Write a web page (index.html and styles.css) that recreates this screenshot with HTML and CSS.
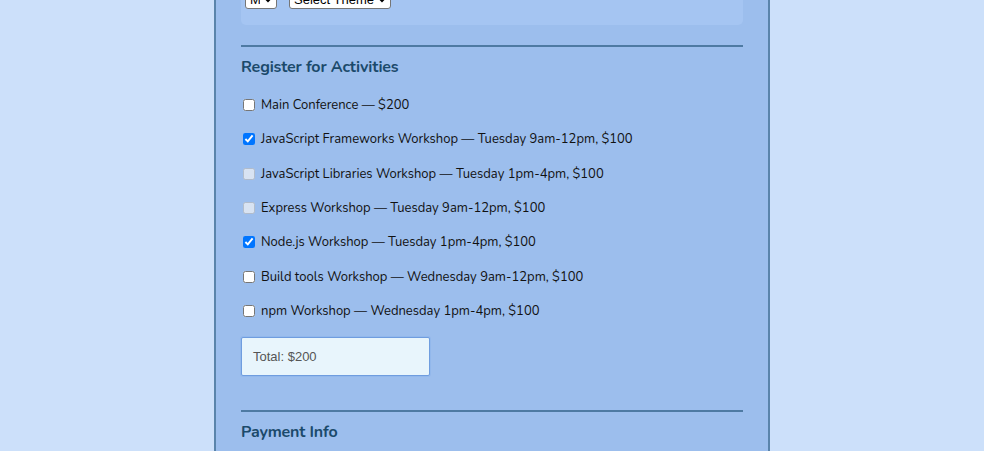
FILE: index.html
```html
<!DOCTYPE html>
<html lang="en">
<head>
<meta charset="utf-8">
<title>Register</title>
<link rel="stylesheet" href="styles.css">
</head>
<body>
<div class="page">
  <form class="form">
    <div class="shirt-box">
      <select class="sel-size"><option>M</option></select>
      <select class="sel-theme"><option>Select Theme</option></select>
    </div>

    <fieldset class="activities">
      <legend class="section-title">Register for Activities</legend>
      <label class="act"><input type="checkbox">Main Conference — $200</label>
      <label class="act"><input type="checkbox" checked>JavaScript Frameworks Workshop — Tuesday 9am-12pm, $100</label>
      <label class="act"><input type="checkbox" disabled>JavaScript Libraries Workshop — Tuesday 1pm-4pm, $100</label>
      <label class="act"><input type="checkbox" disabled>Express Workshop — Tuesday 9am-12pm, $100</label>
      <label class="act"><input type="checkbox" checked>Node.js Workshop — Tuesday 1pm-4pm, $100</label>
      <label class="act"><input type="checkbox">Build tools Workshop — Wednesday 9am-12pm, $100</label>
      <label class="act"><input type="checkbox">npm Workshop — Wednesday 1pm-4pm, $100</label>
      <div class="total">Total: $200</div>
    </fieldset>

    <fieldset class="payment">
      <legend class="section-title">Payment Info</legend>
    </fieldset>
  </form>
</div>
</body>
</html>
```
FILE: styles.css
```css
html, body {
  margin: 0;
  padding: 0;
  background: #cce0fa;
  overflow: hidden;
}
body {
  font-family: "Nunito", "Lato", "Noto Sans", sans-serif;
  color: #1a1a1a;
}
.page {
  width: 502px;
  margin: 0 auto;
  padding: 0 25px;
  height: 451px;
  background: #9cbeed;
  border-left: 2px solid #5a84ab;
  border-right: 2px solid #5a84ab;
}
.form {
  display: flex;
  flex-direction: column;
}
.shirt-box {
  margin-top: -31px;
  padding: 20px 4px 16px;
  background: #a5c5f2;
  border-radius: 0 0 5px 5px;
  display: flex;
  gap: 12px;
  align-items: center;
}
.shirt-box select {
  height: 20px;
  font-family: "Liberation Sans", Arial, sans-serif;
  font-size: 13px;
  background: #fff;
  border: 1px solid #767676;
  border-radius: 3px;
  color: #000;
}
.sel-size { width: 32px; }
.sel-theme { width: 102px; }
fieldset {
  border: 0;
  margin: 0;
  padding: 0;
  border-top: 2px solid #4e7aa3;
  display: flex;
  flex-direction: column;
}
.activities {
  margin-top: 20px;
  padding-bottom: 34px;
}
.section-title {
  padding: 0;
  float: left;
  width: 100%;
  font-size: 16px;
  font-weight: 700;
  letter-spacing: -0.15px;
  color: #1b4a6b;
  margin-top: 9px;
  line-height: 22px;
}
.act {
  display: flex;
  align-items: center;
  font-size: 13px;
  line-height: 20px;
  height: 20px;
  margin-top: 14.33px;
  color: #111;
}
.activities .act:first-of-type { margin-top: 17px; }
.act input {
  width: 12px;
  height: 12px;
  margin: 0 6px 0 2px;
}
.total {
  margin-top: 16px;
  height: 37px;
  border: 1px solid #6f9ddf;
  box-shadow: 0 0 0 1px rgba(140, 180, 235, 0.6);
  border-radius: 2px;
  background: #e8f5fc;
  font-family: "Liberation Sans", Arial, sans-serif;
  font-size: 13px;
  color: #555;
  display: flex;
  align-items: center;
  padding-left: 11px;
  width: 176px;
}
.payment {
  margin-top: 0;
}
```
